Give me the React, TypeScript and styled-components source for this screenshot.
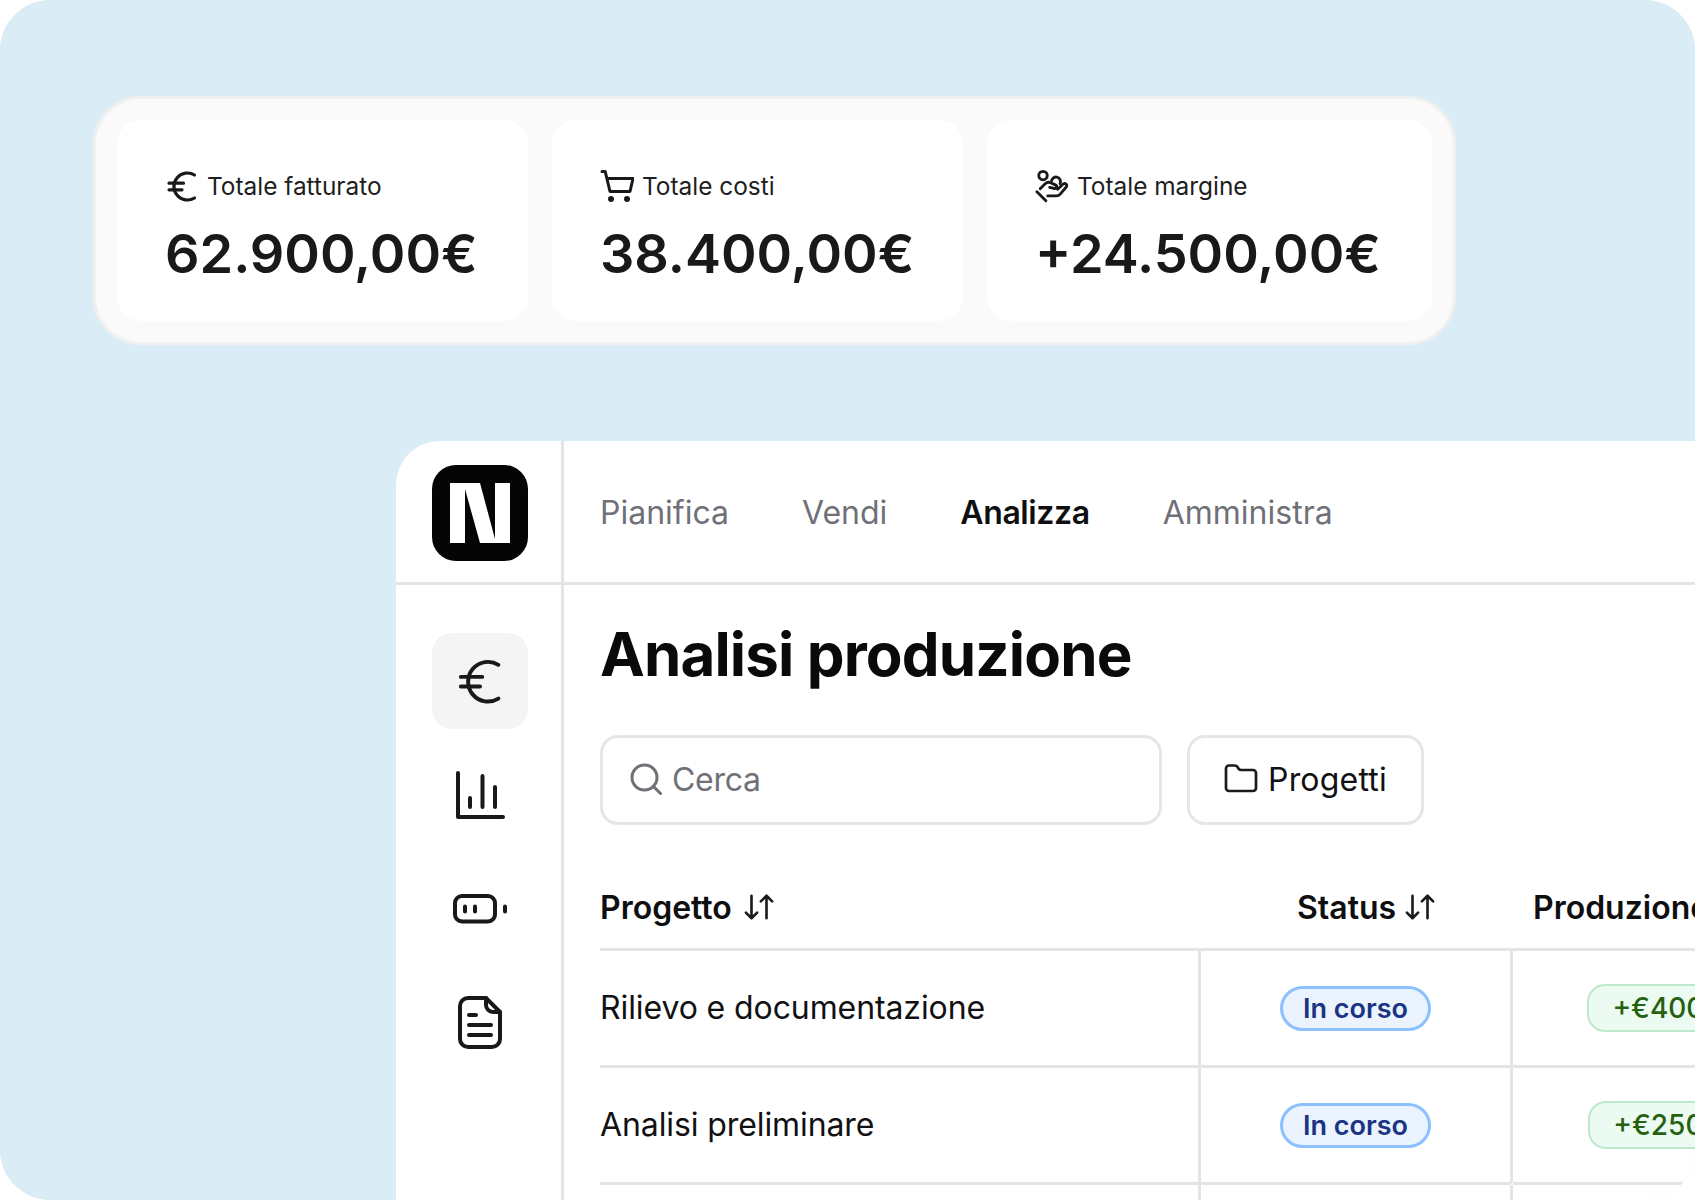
import React from "react";
import styled, { createGlobalStyle } from "styled-components";
import { Folder } from "lucide-react";

const Global = createGlobalStyle`
  * { box-sizing: border-box; }
  html, body { margin: 0; padding: 0; background: #fff; }
  body { font-family: Inter, "Liberation Sans", sans-serif; color: #111113; }
`;

const Stage = styled.div`
  width: 1695px;
  height: 1200px;
  overflow: hidden;
  background: #daecf6;
  border-radius: 50px;
  padding: 96px 0 0 93px;
`;

const StatStrip = styled.section`
  display: flex;
  gap: 24px;
  width: fit-content;
  height: 249px;
  padding: 21px;
  background: #fafafa;
  border: 3px solid #f0f0f0;
  border-radius: 48px;
`;

const StatCard = styled.div<{ $width: number }>`
  display: flex;
  flex-direction: column;
  justify-content: center;
  gap: 17px;
  width: ${(p) => p.$width}px;
  padding: 16px 0 0 48px;
  background: #fff;
  border-radius: 24px;
`;

const StatLabel = styled.div`
  display: flex;
  align-items: center;
  gap: 8px;
  font-size: 24.4px;
  line-height: 34px;
  color: #1e1e20;
`;

const StatValue = styled.div`
  font-size: 54px;
  line-height: 68px;
  font-weight: 600;
  color: #19191b;
`;

const Panel = styled.section`
  display: grid;
  grid-template-columns: 168px 1131px;
  grid-template-rows: 144px 1fr;
  width: 1299px;
  height: 759px;
  margin: 96px 0 0 303px;
  overflow: hidden;
  background: #fff;
  border-top-left-radius: 44px;
`;

const LogoCell = styled.div`
  display: flex;
  align-items: center;
  justify-content: center;
  padding: 3px 0 0 3px;
  border-right: 3px solid #e4e4e4;
  border-bottom: 3px solid #e4e4e4;
`;

const Logo = styled.div`
  display: flex;
  align-items: center;
  justify-content: center;
  width: 96px;
  height: 96px;
  background: #050505;
  border-radius: 24px;
`;

const TopNav = styled.nav`
  display: flex;
  align-items: center;
  gap: 73px;
  padding: 2px 0 0 36px;
  border-bottom: 3px solid #e4e4e4;
`;

const Tab = styled.span<{ $active?: boolean }>`
  font-size: 32px;
  font-weight: ${(p) => (p.$active ? 600 : 400)};
  letter-spacing: ${(p) => (p.$active ? "-0.4px" : "0")};
  color: ${(p) => (p.$active ? "#0f0f11" : "#6f7078")};
`;

const Rail = styled.aside`
  display: flex;
  flex-direction: column;
  align-items: center;
  gap: 18px;
  padding: 48px 0 0 3px;
  border-right: 3px solid #e4e4e4;
`;

const RailItem = styled.div<{ $active?: boolean }>`
  display: flex;
  flex: none;
  align-items: center;
  justify-content: center;
  width: 96px;
  height: 96px;
  border-radius: 20px;
  background: ${(p) => (p.$active ? "#f4f4f4" : "transparent")};
`;

const Main = styled.main`
  padding-left: 36px;
  overflow: hidden;
`;

const Title = styled.h1`
  margin: 31px 0 0;
  font-size: 60px;
  line-height: 76px;
  font-weight: 700;
  letter-spacing: -0.85px;
  color: #0a0a0a;
`;

const Filters = styled.div`
  display: flex;
  gap: 25px;
  margin-top: 43px;
`;

const SearchBox = styled.div`
  display: flex;
  align-items: center;
  gap: 10px;
  width: 562px;
  height: 90px;
  padding: 0 0 2px 27px;
  border: 3px solid #e6e6e6;
  border-radius: 18px;
  font-size: 32px;
  letter-spacing: -0.3px;
  color: #6f7078;
`;

const FilterButton = styled.div`
  display: flex;
  align-items: center;
  gap: 9px;
  width: 237px;
  height: 90px;
  padding: 0 0 2px 33px;
  border: 3px solid #e6e6e6;
  border-radius: 18px;
  font-size: 32px;
  letter-spacing: 0.2px;
  color: #111113;
`;

const TableGrid = styled.div`
  display: grid;
  grid-template-columns: 598px 312px 337px;
  width: 1095px;
  margin-top: 39px;
`;

const HeadRow = styled.div`
  display: contents;
`;

const HeadCell = styled.div<{ $pad?: number; $gap?: number }>`
  display: flex;
  align-items: center;
  gap: ${(p) => p.$gap ?? 12}px;
  height: 87px;
  padding-top: 2px;
  padding-left: ${(p) => p.$pad ?? 0}px;
  border-bottom: 3px solid #e4e4e4;
  font-size: 32px;
  font-weight: 600;
  color: #0f0f11;
  white-space: nowrap;
`;

const Cell = styled.div<{ $divider?: boolean; $center?: boolean; $empty?: boolean; $lineEnd?: number }>`
  position: relative;
  display: flex;
  align-items: center;
  justify-content: ${(p) => (p.$center ? "center" : "flex-start")};
  height: ${(p) => (p.$empty ? 30 : 117)}px;
  padding-bottom: ${(p) => (p.$center ? 0 : 2)}px;
  border-bottom: ${(p) => (p.$empty ? 0 : 3)}px solid ${(p) => (p.$lineEnd ? "transparent" : "#e4e4e4")};
  border-left: ${(p) => (p.$divider ? "3px solid #e4e4e4" : "0")};
  font-size: 32px;
  letter-spacing: -0.1px;
  color: #111113;
  white-space: nowrap;

  ${(p) =>
    p.$lineEnd
      ? `&::after {
          content: "";
          position: absolute;
          left: 0;
          bottom: -3px;
          width: ${p.$lineEnd}px;
          height: 3px;
          background: #e4e4e4;
        }`
      : ""}
`;

const StatusPill = styled.span`
  display: inline-flex;
  align-items: center;
  height: 45px;
  padding: 0 20px;
  background: #eaf3fe;
  border: 3px solid #8cc0ff;
  border-radius: 23px;
  font-size: 27px;
  font-weight: 600;
  letter-spacing: 0;
  color: #1b3484;
`;

const AmountPill = styled.span`
  display: inline-flex;
  align-items: center;
  height: 48px;
  padding: 0 23px;
  background: #ebfbf1;
  border: 2.5px solid #bde8cd;
  border-radius: 18px;
  font-size: 28px;
  font-weight: 500;
  letter-spacing: 0;
  color: #25610f;
`;

const EuroIcon = ({ size, stroke }: { size: number; stroke: number }) => (
  <svg width={size} height={size} viewBox="0 0 34 34" fill="none" stroke="#19191b" strokeWidth={stroke} strokeLinecap="round">
    <path d="M29.5 6A13.5 13.5 0 1 0 29.5 29" />
    <path d="M4 14.2h14.5M4 20.8h13" />
  </svg>
);

const CartIcon = () => (
  <svg width="34" height="34" viewBox="0 0 34 34" fill="none" stroke="#19191b" strokeWidth="3" strokeLinecap="round" strokeLinejoin="round">
    <path d="M2 2.5h3.2L10 22.5h20L33 9.5H7" />
    <circle cx="11" cy="30" r="3" fill="#19191b" stroke="none" />
    <circle cx="27" cy="30" r="3" fill="#19191b" stroke="none" />
  </svg>
);

const HandIcon = () => (
  <svg width="34" height="34" viewBox="0 0 36 36" fill="none" stroke="#19191b" strokeWidth="3" strokeLinecap="round" strokeLinejoin="round">
    <circle cx="8.5" cy="7" r="4.5" />
    <path d="M17.5 12.5a4.8 4.8 0 1 1 9 3" />
    <path d="M2 24l9.5 9.5" />
    <path d="M5.5 21l5-5c2-2 4-2.4 6-1.4l5 2.2c2.6 1.2 1.2 4.6-1.4 3.8l-4.6-1.2" />
    <path d="M13.5 28.5h9c2 0 3.2-.8 4.4-2.2l6-7c2-2.8-1.4-5.4-3.6-3l-5.3 5.2" />
  </svg>
);

const ChartIcon = () => (
  <svg width="50" height="50" viewBox="0 0 50 50" fill="none" stroke="#19191b" strokeWidth="4" strokeLinecap="round" strokeLinejoin="round">
    <path d="M3 3v44h45" />
    <path d="M15 28v9M27.5 6v31M40 17v20" />
  </svg>
);

const BatteryIcon = () => (
  <svg width="56" height="32" viewBox="0 0 56 32" fill="none" stroke="#19191b" strokeWidth="4" strokeLinecap="round">
    <rect x="3" y="3" width="40" height="25.5" rx="7" />
    <path d="M13 13.5v5M23 13.5v5M53 13.5v5" />
  </svg>
);

const DocIcon = () => (
  <svg width="48" height="58" viewBox="0 0 48 58" fill="none" stroke="#19191b" strokeWidth="4" strokeLinecap="round" strokeLinejoin="round">
    <path d="M12 4h18l14 14v27a8 8 0 0 1-8 8H12a8 8 0 0 1-8-8V12a8 8 0 0 1 8-8z" />
    <path d="M30 4v7a7 7 0 0 0 7 7h7" />
    <path d="M13 21h7M13 31h22M13 41h22" />
  </svg>
);

const SearchIcon = () => (
  <svg width="32" height="32" viewBox="0 0 32 32" fill="none" stroke="#6f7078" strokeWidth="3" strokeLinecap="round">
    <circle cx="14.5" cy="14.5" r="12.5" />
    <path d="M23.5 23.5l7 7" />
  </svg>
);

const SortIcon = () => (
  <svg width="30" height="30" viewBox="0 0 32 30" fill="none" stroke="#1b1b1d" strokeWidth="2.8" strokeLinecap="round" strokeLinejoin="round">
    <path d="M8 3v24M2 21l6 6 6-6" />
    <path d="M24 27V3M18 9l6-6 6 6" />
  </svg>
);

const LogoMark = () => (
  <svg width="60" height="60" viewBox="0 0 60 60">
    <rect width="60" height="60" fill="#fff" />
    <path d="M15 6L30 60H15zM45 56V0H30z" fill="#050505" />
  </svg>
);

const rows = [
  { name: "Rilievo e documentazione", amount: "+€400,00" },
  { name: "Analisi preliminare", amount: "+€250,00", lineEnd: 170 },
];

export default function App() {
  return (
    <Stage>
      <Global />
      <StatStrip>
        <StatCard $width={411}>
          <StatLabel><EuroIcon size={34} stroke={3.2} />Totale fatturato</StatLabel>
          <StatValue>62.900,00€</StatValue>
        </StatCard>
        <StatCard $width={411}>
          <StatLabel><CartIcon />Totale costi</StatLabel>
          <StatValue>38.400,00€</StatValue>
        </StatCard>
        <StatCard $width={445}>
          <StatLabel><HandIcon />Totale margine</StatLabel>
          <StatValue>+24.500,00€</StatValue>
        </StatCard>
      </StatStrip>
      <Panel>
        <LogoCell><Logo><LogoMark /></Logo></LogoCell>
        <TopNav>
          <Tab>Pianifica</Tab>
          <Tab>Vendi</Tab>
          <Tab $active>Analizza</Tab>
          <Tab>Amministra</Tab>
        </TopNav>
        <Rail>
          <RailItem $active><EuroIcon size={50} stroke={2.7} /></RailItem>
          <RailItem><ChartIcon /></RailItem>
          <RailItem><BatteryIcon /></RailItem>
          <RailItem><DocIcon /></RailItem>
        </Rail>
        <Main>
          <Title>Analisi produzione</Title>
          <Filters>
            <SearchBox><SearchIcon />Cerca</SearchBox>
            <FilterButton><Folder size={36} strokeWidth={1.8} color="#1b1b1d" />Progetti</FilterButton>
          </Filters>
          <TableGrid>
            <HeadRow>
              <HeadCell>Progetto<SortIcon /></HeadCell>
              <HeadCell $pad={99} $gap={9}>Status<SortIcon /></HeadCell>
              <HeadCell $pad={23}>Produzione</HeadCell>
            </HeadRow>
            {rows.map((r) => (
              <React.Fragment key={r.name}>
                <Cell>{r.name}</Cell>
                <Cell $divider $center><StatusPill>In corso</StatusPill></Cell>
                <Cell $divider $center $lineEnd={r.lineEnd}><AmountPill>{r.amount}</AmountPill></Cell>
              </React.Fragment>
            ))}
            <Cell $empty />
            <Cell $empty $divider />
            <Cell $empty $divider />
          </TableGrid>
        </Main>
      </Panel>
    </Stage>
  );
}
